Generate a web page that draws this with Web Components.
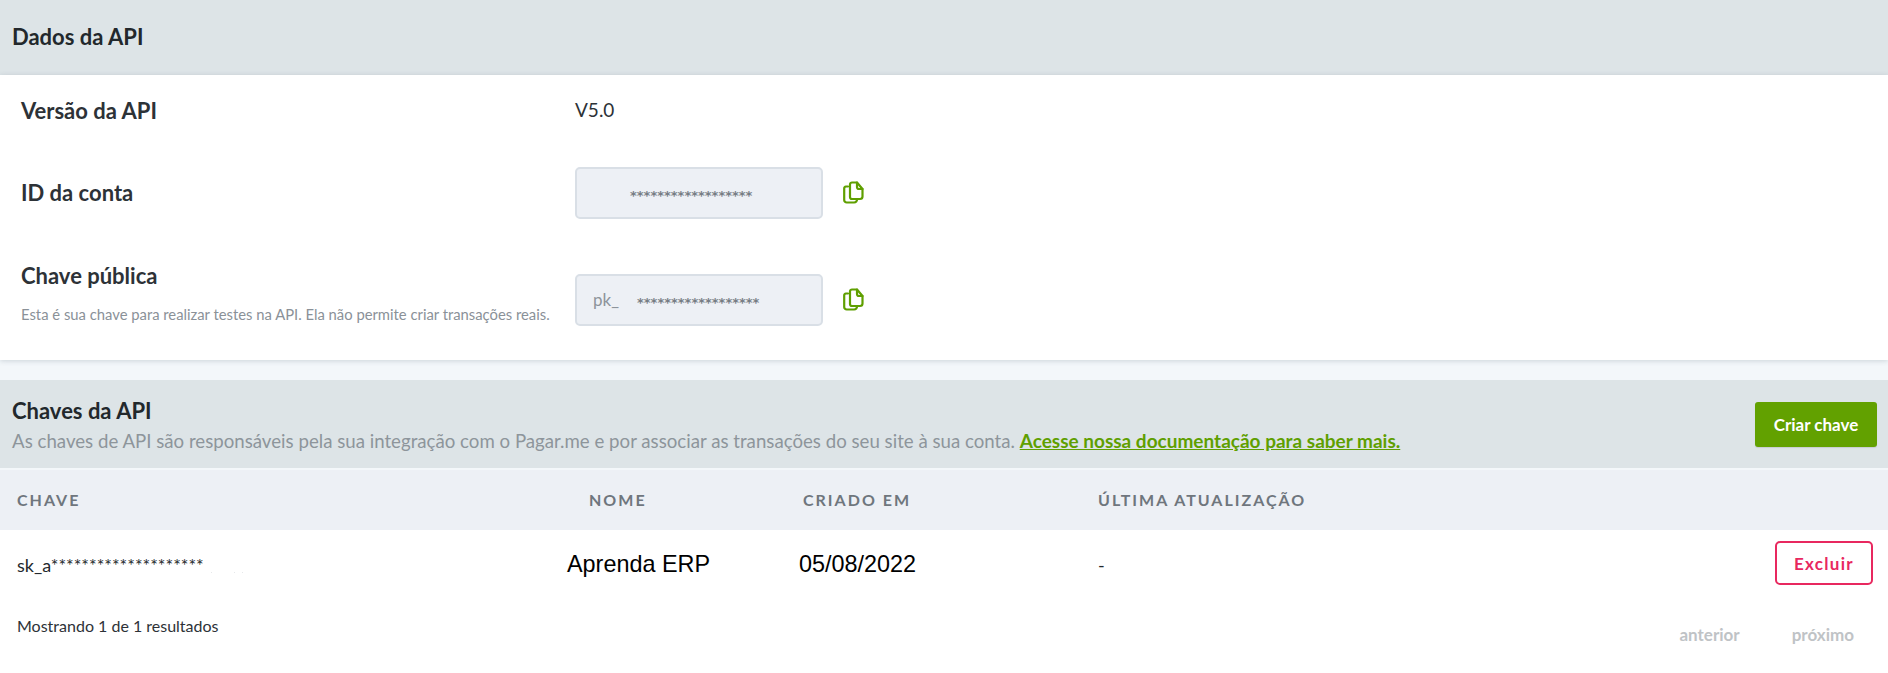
<!DOCTYPE html>
<html lang="pt-BR"><head><meta charset="utf-8"><title>Dados da API</title>
<style>
html,body{margin:0;padding:0;background:#f3f7fa;color:#2d3237;font-family:Lato,"Liberation Sans",sans-serif}
</style></head><body>
<api-page></api-page>
<script>
const def=(name,css,html)=>customElements.define(name,class extends HTMLElement{constructor(){super();this.attachShadow({mode:'open'}).innerHTML=`<style>${css}</style>${html}`}});
def('copy-icon',`:host{display:inline-flex;width:21px;height:23px;color:#5f9f00}svg{width:21px;height:23px}`,
`<svg viewBox="0 0 21 23" fill="none" stroke="currentColor" stroke-width="2.200" stroke-linejoin="round" stroke-linecap="round"><path d="M7 3.500V16a2 2 0 0 0 2 2h8a2.500 2.500 0 0 0 2.500-2.500V8L14 1.500H9A2 2 0 0 0 7 3.500Z"/><path d="M14 1.500V6a2 2 0 0 0 2 2h3.500"/><path d="M5 5.500H3A2 2 0 0 0 1.200 7.500V19a2.500 2.500 0 0 0 2.500 2.500H11a3 3 0 0 0 3-3.500"/></svg>`);
def('masked-input',`:host{display:flex;align-items:center;box-sizing:border-box;width:248px;height:52px;background:#edf0f5;border:2px solid #d9dfe6;border-radius:5px;font:16px/1 Lato,sans-serif;color:#8d949b}
.pre{font-size:17px;margin-left:16px;width:44px;flex:none}.val{font:700 13px/1 "DejaVu Sans",sans-serif;color:#777d84;position:relative;top:3px}`,
`<span class="pre"><slot name="prefix"></slot></span><span class="val"><slot></slot></span>`);
def('info-row',`:host{display:grid;grid-template-columns:575px 248px 41px;align-items:center}
.l{padding-left:21px;padding-bottom:var(--lpad,0);font:700 22px/28px Lato,sans-serif;color:#2d3237}
.c{grid-column:3;margin-left:20px;display:flex}`,
`<div class="l"><slot name="label"></slot><slot name="hintwrap"></slot></div><slot></slot><div class="c"><slot name="icon"></slot></div>`);
def('hint-text',`:host{display:block;font:400 14.800px/18px Lato,sans-serif;color:#8a9198;margin-top:15px}`,`<slot></slot>`);
def('section-head',`:host{display:flex;align-items:center;justify-content:space-between;background:#dde4e7;box-sizing:border-box;padding:0 12px}
.t{font:700 22px/30px Lato,sans-serif;color:#22282c;padding-top:var(--tpad,0);padding-bottom:var(--bpad,0)}`,
`<div><div class="t"><slot name="title"></slot></div><slot name="sub"></slot></div><slot></slot>`);
def('section-sub',`:host{display:block;font:400 18.660px/30px Lato,sans-serif;color:#8d959b}`,`<slot></slot>`);
def('api-page',`:host{display:block;width:1888px;height:673px;overflow:hidden;background:#f3f7fa}
.card{background:#fff;height:285px;box-shadow:0 1px 5px rgba(70,90,110,.22);display:flex;flex-direction:column}
.rows{display:flex;flex-direction:column}
.gap{height:20px}
section-head.a{height:75px;--bpad:2px}section-head.b{height:88px;margin-bottom:2px;padding-right:11px;--tpad:3px}
a{color:#5f9f00;font-weight:700;font-size:19px;text-decoration:underline}
.btn{background:#62a100;color:#fff;font:700 17px/1 Lato,sans-serif;border-radius:3px;width:122px;height:45px;display:flex;align-items:center;justify-content:center;margin-top:1px;box-shadow:0 1px 1px rgba(0,0,0,.1)}
.tbl{display:grid;grid-template-columns:589px 214px 295px 1fr}
.th{background:#edf0f5;height:60px;display:flex;align-items:center;font:700 16px/1 Lato,sans-serif;letter-spacing:2px;color:#6f767d;box-sizing:border-box}
.td{background:#fff;height:70px;display:flex;align-items:center;font:400 18px/1 Lato,sans-serif;color:#24292d;box-sizing:border-box}
.sans{font:400 23.400px/1 "Liberation Sans",sans-serif;color:#000}
.dots{display:inline-block;width:1px;height:1px;margin:14px 0 0 7px;background:#e6e8ea;box-shadow:23px 0 #e6e8ea,31px 0 #e6e8ea}
.foot{background:#fff;height:73px;display:flex;justify-content:space-between;padding:0 17px;box-sizing:border-box;font:400 16px/1 Lato,sans-serif}
.nav{display:flex;gap:52px;color:#bfc3c6;font-weight:700;font-size:17px;margin-right:17px;padding-top:26px}
.del{border:2px solid #e8285f;color:#e8285f;background:#fff;border-radius:5px;width:98px;height:44px;margin-bottom:4px;box-sizing:border-box;display:flex;align-items:center;justify-content:center;font:700 17px/1 Lato,sans-serif;letter-spacing:1.300px}
`,
`<section-head class="a"><span slot="title">Dados da API</span></section-head>
<div class="card"><div class="rows">
<info-row style="height:71px"><span slot="label">Versão da API</span><span style="font:400 19px/1 Lato,sans-serif;color:#2d3237;margin-top:-2px">V5.0</span></info-row>
<info-row style="height:93px"><span slot="label">ID da conta</span><masked-input><span style="margin-left:-7px">******************</span></masked-input><copy-icon slot="icon"></copy-icon></info-row>
<info-row style="height:121px;--lpad:14px"><span slot="label">Chave pública</span><hint-text slot="hintwrap">Esta é sua chave para realizar testes na API. Ela não permite criar transações reais.</hint-text><masked-input><span slot="prefix">pk_</span>******************</masked-input><copy-icon slot="icon"></copy-icon></info-row>
</div></div>
<div class="gap"></div>
<section-head class="b"><span slot="title">Chaves da API</span><section-sub slot="sub">As chaves de API são responsáveis pela sua integração com o Pagar.me e por associar as transações do seu site à sua conta. <a>Acesse nossa documentação para saber mais.</a></section-sub><div class="btn">Criar chave</div></section-head>
<div class="tbl">
<div class="th" style="padding-left:17px">CHAVE</div><div class="th">NOME</div><div class="th">CRIADO EM</div><div class="th">ÚLTIMA ATUALIZAÇÃO</div>
<div class="td" style="padding-left:17px">sk_a********************<i class="dots"></i></div><div class="td sans" style="margin-left:-22px">Aprenda ERP</div><div class="td sans" style="margin-left:-4px">05/08/2022</div><div class="td" style="justify-content:space-between;padding-right:15px"><span>-</span><div class="del">Excluir</div></div>
</div>
<div class="foot"><span style="padding-top:18px">Mostrando 1 de 1 resultados</span><div class="nav"><span>anterior</span><span>próximo</span></div></div>`);
</script></body></html>
